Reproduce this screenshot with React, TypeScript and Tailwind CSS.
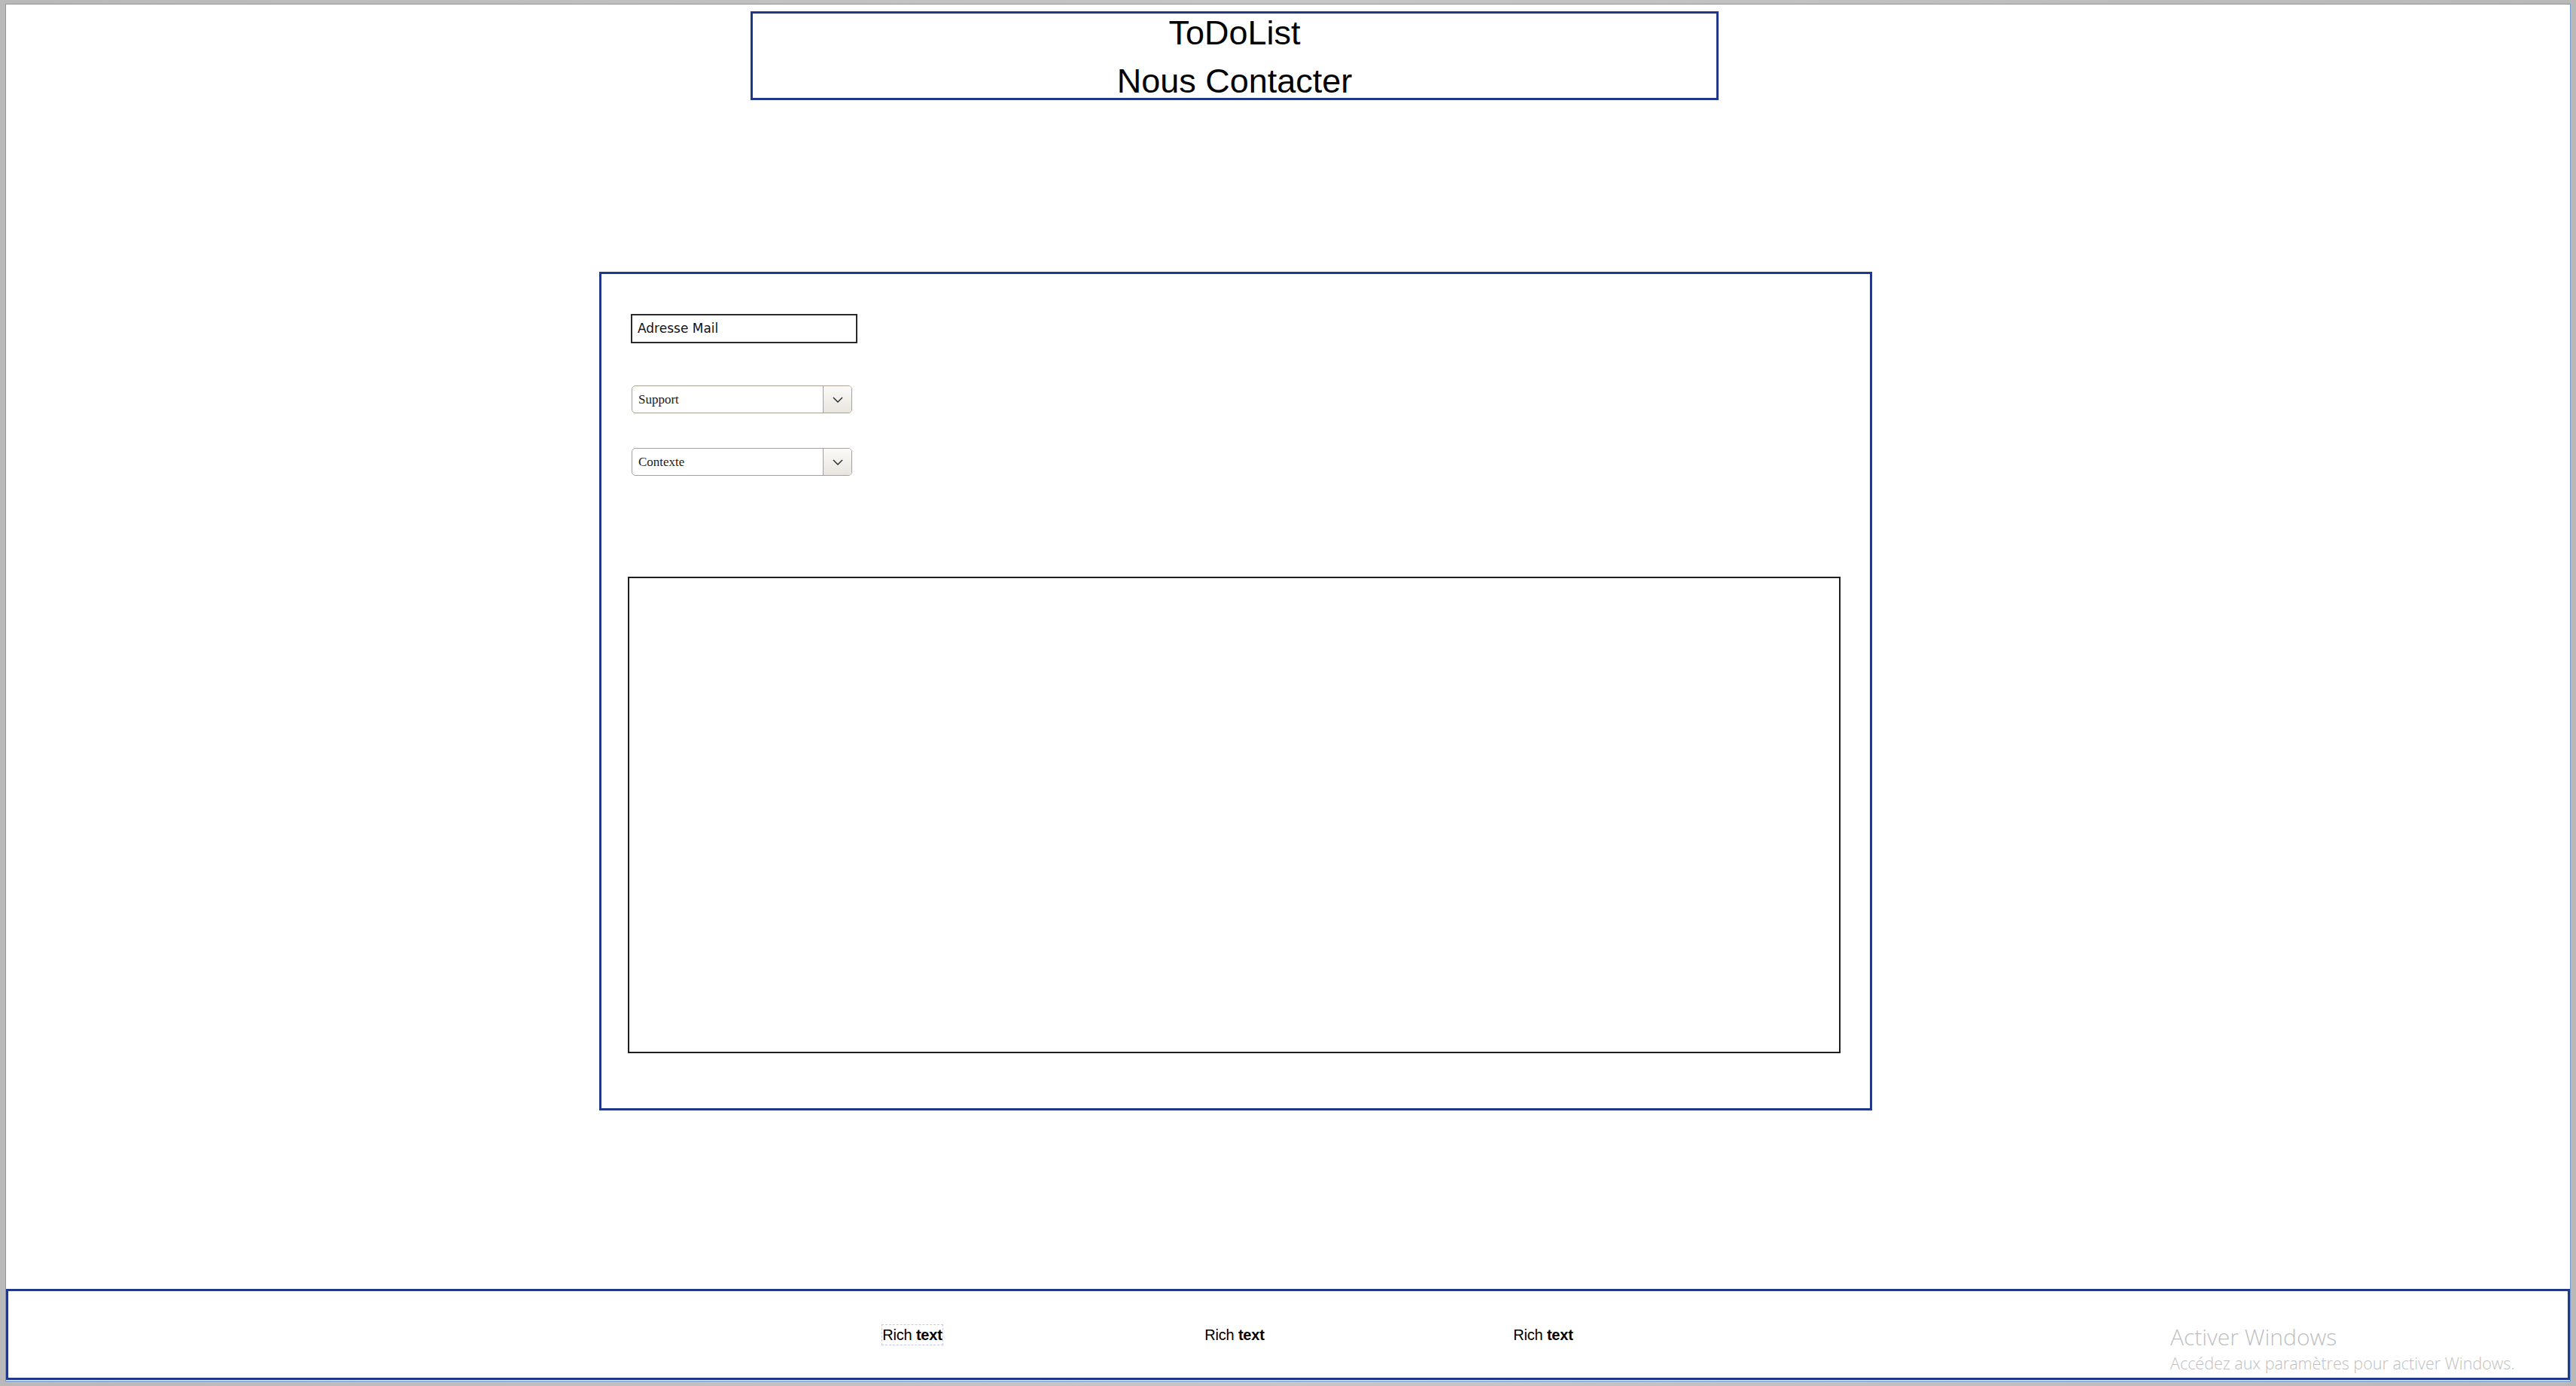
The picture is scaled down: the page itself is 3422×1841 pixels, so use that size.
function Select({ label, className }: { label: string; className?: string }) {
  return (
    <div
      className={
        "flex w-[293px] h-[37px] rounded-[5px] border-[1.5px] border-[#a9a194] bg-white overflow-hidden " +
        (className ?? "")
      }
    >
      <div className="flex-1 flex items-center pl-[8px] text-[17px] text-[#1a1a1a] font-['Liberation_Serif',serif]">
        {label}
      </div>
      <div className="w-[38px] flex items-center justify-center border-l-[1.5px] border-[#a9a194] bg-gradient-to-b from-[#fbfaf8] to-[#e8e5df]">
        <svg width="14" height="8" viewBox="0 0 14 8" fill="none">
          <polyline points="1,1 7,7 13,1" stroke="#222" strokeWidth="1.4" />
        </svg>
      </div>
    </div>
  );
}

function RichText({ selected }: { selected?: boolean }) {
  return (
    <div
      className={
        "h-[28px] w-[82px] flex items-center justify-center whitespace-nowrap border border-dashed " +
        (selected ? "border-[#c9c9f7]" : "border-transparent")
      }
    >
      <span className="text-[20px] leading-none tracking-[-0.2px] text-black">
        Rich <b>text</b>
      </span>
    </div>
  );
}

export default function App() {
  return (
    <div className="w-[3422px] h-[1841px] bg-gradient-to-r from-[#b9b9b9] via-[#c6c6c6] to-[#b9b9b9] pt-[5px] pb-[6px] px-[7px]">
      <div className="relative h-full flex flex-col bg-white border border-[#6f9bd2] font-['Liberation_Sans',Arial,sans-serif]">
        <header className="mt-[9px] ml-[989px] w-[1286px] h-[118px] border-[3px] border-[#21388a] flex flex-col items-center pt-[3px] gap-[19px] text-[45px] leading-none text-black">
          <div>ToDoList</div>
          <div>Nous Contacter</div>
        </header>

        <main className="mt-[228px] ml-[788px] w-[1691px] h-[1114px] border-[3px] border-[#21388a] flex flex-col items-start">
          <div className="mt-[53px] ml-[39px] w-[301px] h-[39px] border-2 border-[#2a2a2a] flex items-center pl-[7px] text-[17px] text-[#111] font-['Comic_Sans_MS','DejaVu_Sans',sans-serif]">
            Adresse Mail
          </div>
          <Select label="Support" className="mt-[56px] ml-[40px]" />
          <Select label="Contexte" className="mt-[46px] ml-[40px]" />
          <div className="mt-[134px] ml-[35px] w-[1611px] h-[633px] border-2 border-[#1e1e1e]" />
        </main>

        <footer className="mt-auto mb-[1px] h-[121px] border-[3px] border-[#21388a] flex items-center">
          <div className="ml-[1160px]">
            <RichText selected />
          </div>
          <div className="ml-[346px]">
            <RichText />
          </div>
          <div className="ml-[328px]">
            <RichText />
          </div>
        </footer>

        <div className="absolute left-[2875px] top-[1751px] flex flex-col gap-[2px] text-[#bfbfbf] font-['Open_Sans','Noto_Sans',sans-serif] pointer-events-none">
          <div className="text-[30px] leading-[38px] font-light">Activer Windows</div>
          <div className="text-[21.5px] leading-[28px] font-light">Accédez aux paramètres pour activer Windows.</div>
        </div>
      </div>
    </div>
  );
}
